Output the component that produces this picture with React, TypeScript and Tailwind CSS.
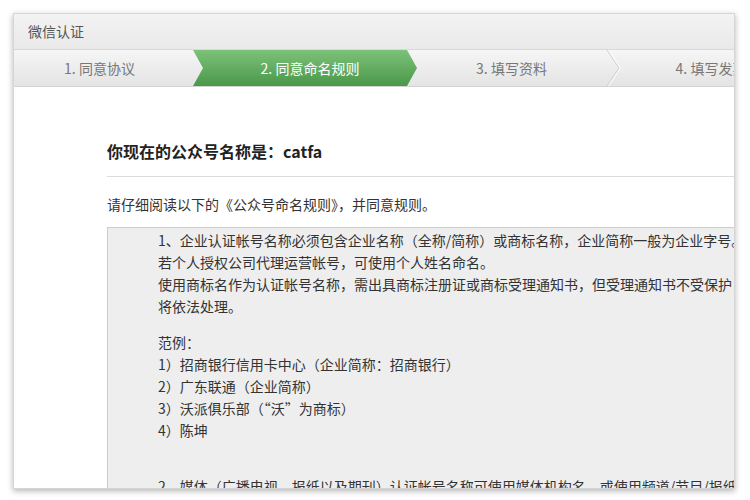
import React from "react";

const font = { fontFamily: '"Noto Sans CJK SC", "Liberation Sans", sans-serif' };

const App = () => {
  return (
    <div className="w-[750px] h-[500px] bg-white pt-[13px] pl-[13px] overflow-hidden" style={font}>
      {/* panel */}
      <div className="w-[722px] h-[476px] border border-[#d6d6d6] bg-white overflow-hidden shadow-[0_2px_6px_rgba(0,0,0,0.3)] flex flex-col">
        {/* header */}
        <div className="h-[36px] shrink-0 flex items-center pl-[14px] text-[14px] text-[#555] bg-gradient-to-b from-[#f3f3f3] to-[#e9e9e9] border-b border-[#d9d9d9]">
          微信认证
        </div>
        {/* steps */}
        <div className="h-[37px] shrink-0 flex items-stretch bg-gradient-to-b from-[#f6f6f6] to-[#e4e4e4] border-b border-[#d3d3d3] text-[14px] text-[#777]">
          <div className="w-[179px] shrink-0 flex items-center justify-center pr-2">1. 同意协议</div>
          <div className="w-[224px] shrink-0 flex items-center justify-center pl-[10px] text-white bg-gradient-to-b from-[#7cc279] to-[#4a984a] [clip-path:polygon(0_0,calc(100%-10px)_0,100%_50%,calc(100%-10px)_100%,0_100%,10px_50%)]">
            2. 同意命名规则
          </div>
          <div className="w-[189px] shrink-0 flex items-center justify-center">3. 填写资料</div>
          <svg width="15" height="36" viewBox="0 0 15 36" className="shrink-0">
            <polyline points="1,0 13,18 1,36" fill="none" stroke="#cfcfcf" strokeWidth="1" />
            <polyline points="2.5,0 14.5,18 2.5,36" fill="none" stroke="#ffffff" strokeWidth="1" />
          </svg>
          <div className="w-[180px] shrink-0 flex items-center justify-center">4. 填写发票</div>
        </div>
        {/* content */}
        <div className="pl-[93px] flex-1 min-h-0 flex flex-col">
          <h2 className="mt-[52px] pb-[13px] text-[16px] leading-[24px] font-bold text-[#222] whitespace-nowrap border-b border-[#dcdcdc]">
            你现在的公众号名称是：catfa
          </h2>
          <p className="mt-[16px] text-[14px] leading-[22px] text-[#333] whitespace-nowrap">
            请仔细阅读以下的《公众号命名规则》，并同意规则。
          </p>
          <div className="mt-[12px] flex-1 w-[700px] border border-[#cccccc] bg-[#eeeeee] pl-[50px] pt-[1px] text-[14px] leading-[22px] text-[#333] whitespace-nowrap">
            <p>1、企业认证帐号名称必须包含企业名称（全称/简称）或商标名称，企业简称一般为企业字号。</p>
            <p>若个人授权公司代理运营帐号，可使用个人姓名命名。</p>
            <p>使用商标名作为认证帐号名称，需出具商标注册证或商标受理通知书，但受理通知书不受保护，</p>
            <p>将依法处理。</p>
            <p className="mt-[14px]">范例：</p>
            <p>1）招商银行信用卡中心（企业简称：招商银行）</p>
            <p>2）广东联通（企业简称）</p>
            <p>3）沃派俱乐部（“沃”为商标）</p>
            <p>4）陈坤</p>
            <p className="mt-[34px]">2、媒体（广播电视、报纸以及期刊）认证帐号名称可使用媒体机构名，或使用频道/节目/报纸名称。</p>
          </div>
        </div>
      </div>
    </div>
  );
};

export default App;
